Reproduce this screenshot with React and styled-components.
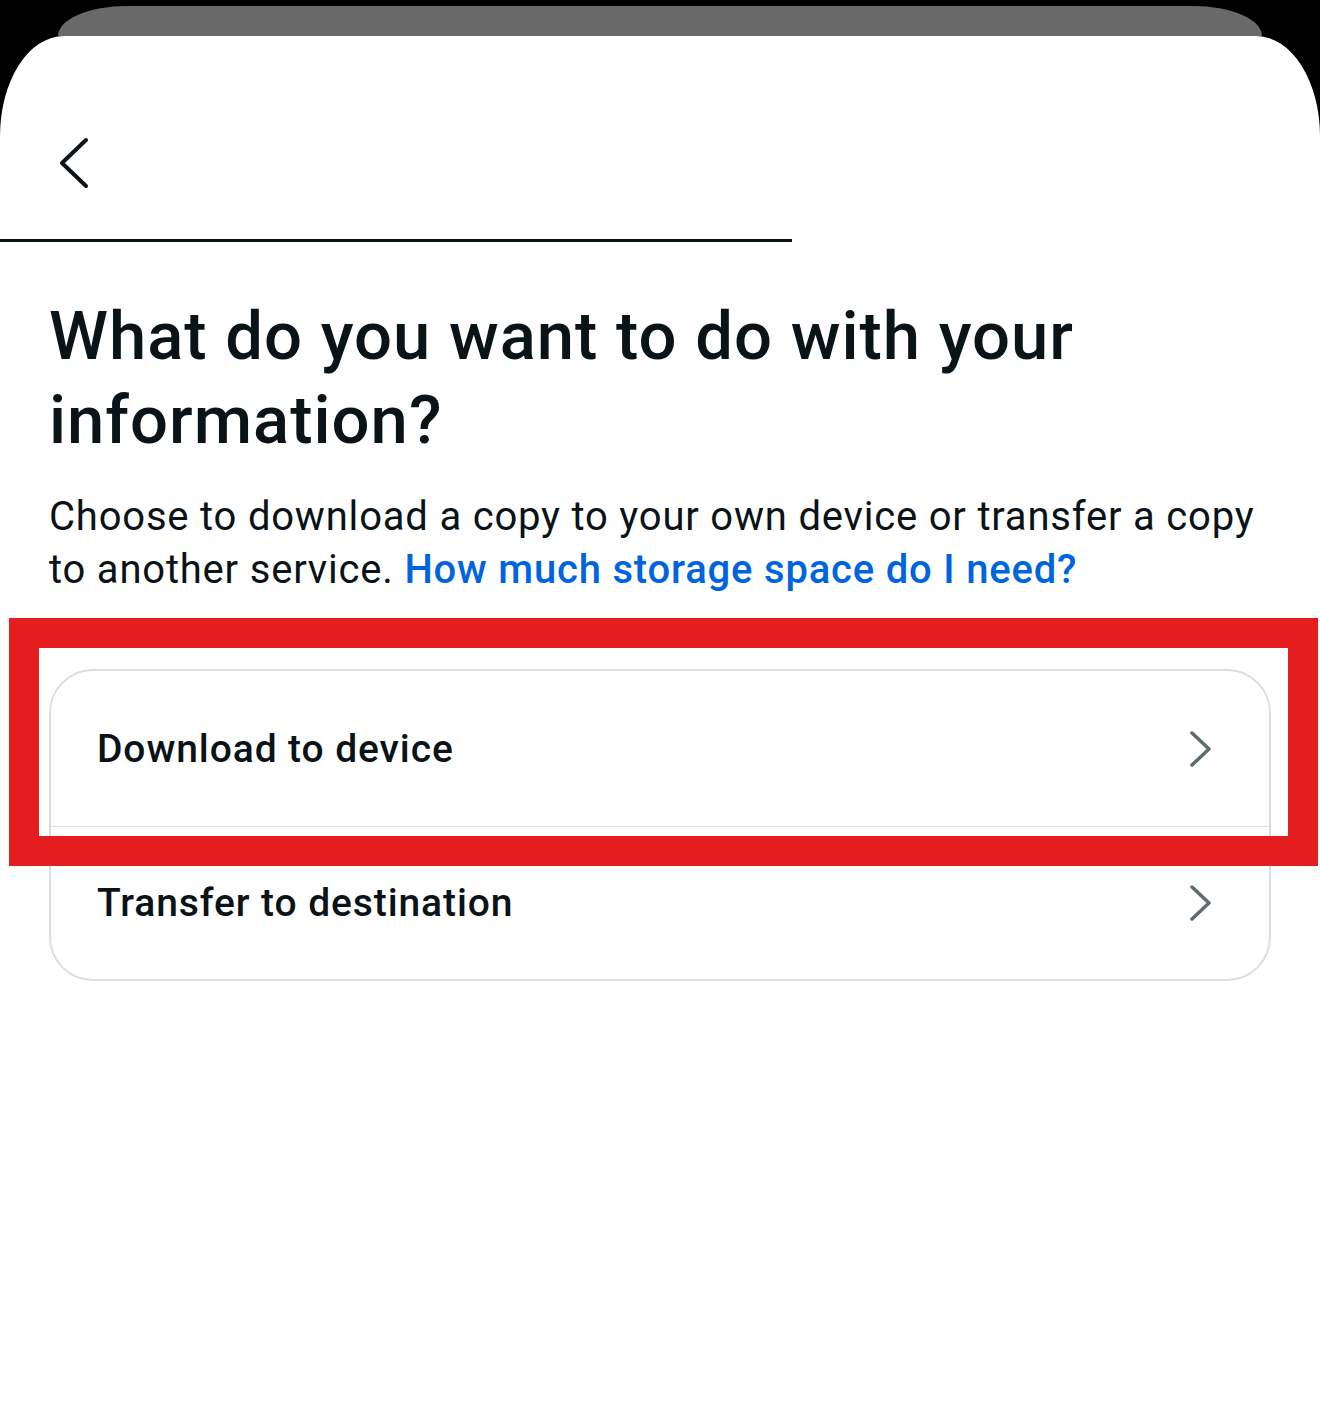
import styled, { createGlobalStyle } from 'styled-components';

const GlobalStyle = createGlobalStyle`
  html, body {
    margin: 0;
    padding: 0;
    background: #000;
  }
  * {
    box-sizing: border-box;
  }
`;

const Page = styled.div`
  display: flex;
  flex-direction: column;
  height: 1411px;
  padding-top: 6px;
  background: #000;
  overflow: hidden;
  font-family: Roboto, 'Noto Sans', sans-serif;
  color: #0a1317;
`;

const Backdrop = styled.div`
  height: 30px;
  margin: 0 58px;
  background: #696969;
  border-radius: 69px 69px 0 0 / 30px 30px 0 0;
`;

const Sheet = styled.div`
  flex: 1;
  display: flex;
  flex-direction: column;
  background: #fff;
  border-radius: 64px 64px 0 0 / 100px 100px 0 0;
`;

const Header = styled.div`
  height: 203px;
  display: flex;
  align-items: center;
  padding: 50px 0 0 52px;
`;

const BackButton = styled.button`
  display: flex;
  align-items: center;
  justify-content: center;
  width: 40px;
  height: 56px;
  padding: 0;
  border: 0;
  background: none;
  color: #0a1317;
  cursor: pointer;
`;

const Progress = styled.div`
  height: 3px;
  background: transparent;
  & > div {
    height: 100%;
    background: #0a1317;
  }
`;

const Content = styled.div`
  padding: 52px 49px 0;
`;

const Title = styled.h1`
  margin: 0;
  font-size: 67px;
  line-height: 84px;
  font-weight: 500;
  letter-spacing: 1px;
  color: #0a1317;
`;

const Description = styled.p`
  margin: 28px 0 0;
  font-size: 40px;
  line-height: 53px;
  font-weight: 400;
  letter-spacing: 0.8px;
  color: #0a1317;
`;

const Link = styled.a`
  color: #0064e0;
  font-weight: 500;
  text-decoration: none;
`;

const OptionsWrap = styled.div`
  position: relative;
  margin-top: 73px;
`;

const Options = styled.div`
  border: 2px solid #dadde1;
  border-radius: 44px;
  overflow: hidden;
`;

const Option = styled.div`
  display: flex;
  align-items: center;
  justify-content: space-between;
  height: ${({ $first }) => ($first ? '155px' : '153px')};
  padding: 0 56px 0 46px;
  border-top: ${({ $first }) => ($first ? 'none' : '1px solid #dde0e3')};
  font-size: 39px;
  font-weight: 500;
  letter-spacing: 0.9px;
  color: #0a1317;
`;

const Highlight = styled.div`
  position: absolute;
  left: -40px;
  top: -51px;
  width: 1309px;
  height: 248px;
  border: 30px solid #e41e1e;
  pointer-events: none;
`;

function ChevronLeft() {
  return (
    <svg width="34" height="52" viewBox="0 0 34 52" fill="none">
      <path
        d="M31 3 L7 26 L31 49"
        stroke="currentColor"
        strokeWidth="4"
        strokeLinecap="round"
        strokeLinejoin="round"
      />
    </svg>
  );
}

function ChevronRight() {
  return (
    <svg width="24" height="36" viewBox="0 0 24 36" fill="none">
      <path
        d="M3 2 L20 18 L3 34"
        stroke="#5f6b73"
        strokeWidth="3.5"
        strokeLinecap="round"
        strokeLinejoin="round"
      />
    </svg>
  );
}

const options = ['Download to device', 'Transfer to destination'];

export default function App() {
  return (
    <>
      <GlobalStyle />
      <Page>
        <Backdrop />
        <Sheet>
          <Header>
            <BackButton aria-label="Back">
              <ChevronLeft />
            </BackButton>
          </Header>
          <Progress>
            <div style={{ width: '60%' }} />
          </Progress>
          <Content>
            <Title>What do you want to do with your information?</Title>
            <Description>
              Choose to download a copy to your own device or transfer a copy
              to another service.{' '}
              <Link href="#">How much storage space do I need?</Link>
            </Description>
            <OptionsWrap>
              <Options>
                {options.map((label, i) => (
                  <Option key={label} $first={i === 0}>
                    <span>{label}</span>
                    <ChevronRight />
                  </Option>
                ))}
              </Options>
              <Highlight />
            </OptionsWrap>
          </Content>
        </Sheet>
      </Page>
    </>
  );
}
